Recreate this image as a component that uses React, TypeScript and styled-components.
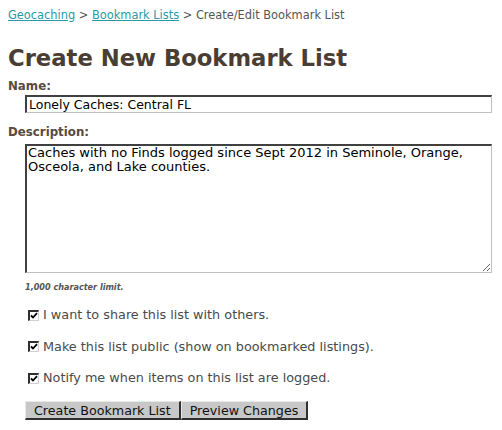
import React from 'react';
import styled, { createGlobalStyle } from 'styled-components';

const GlobalStyle = createGlobalStyle`
  body {
    margin: 0;
    background: #ffffff;
    font-family: "DejaVu Sans", Verdana, sans-serif;
    color: #4a4a4a;
  }
`;

const Page = styled.div`
  padding: 8px 8px 0 8px;
  width: 502px;
  box-sizing: border-box;
`;

const Breadcrumb = styled.div`
  font-size: 11.4px;
  line-height: 15px;
  color: #555555;
`;

const CrumbLink = styled.a`
  color: #2a9aa8;
  text-decoration: underline;
`;

const Title = styled.h1`
  margin: 21px 0 0 0;
  font-size: 22.7px;
  line-height: 28px;
  font-weight: bold;
  color: #4a3d33;
`;

const Label = styled.div<{ $top: number }>`
  font-size: 11.8px;
  line-height: 15px;
  font-weight: bold;
  color: #5b4a3b;
  margin-top: ${(p) => p.$top}px;
`;

const Indented = styled.div`
  padding-left: 17px;
`;

const TextInput = styled.input`
  display: block;
  box-sizing: border-box;
  width: 467px;
  height: 18px;
  margin: 1px 0 0 0;
  padding: 0 2px;
  font-family: "DejaVu Sans", Verdana, sans-serif;
  font-size: 12.5px;
  color: #000;
  border-style: solid;
  border-width: 2px 1px 1px 2px;
  border-color: #404040 #c0c0c0 #c0c0c0 #404040;
  outline: none;
`;

const TextArea = styled.textarea`
  display: block;
  box-sizing: border-box;
  width: 467px;
  height: 129px;
  margin: 4px 0 0 0;
  padding: 0 1px;
  font-family: "DejaVu Sans", Verdana, sans-serif;
  font-size: 13px;
  line-height: 14px;
  color: #000;
  border-style: solid;
  border-width: 2px 1px 1px 2px;
  border-color: #404040 #c0c0c0 #c0c0c0 #404040;
  resize: vertical;
  outline: none;
`;

const Hint = styled.div`
  margin-top: 8px;
  font-family: "DejaVu Sans Condensed", "DejaVu Sans", Verdana, sans-serif;
  font-size: 9px;
  line-height: 13px;
  font-weight: bold;
  font-style: italic;
  color: #555;
`;

const Options = styled.div`
  margin-top: 13px;
  display: flex;
  flex-direction: column;
  gap: 15.5px;
`;

const OptionRow = styled.label`
  display: flex;
  align-items: center;
  gap: 4px;
  padding-left: 3px;
  font-size: 12.8px;
  line-height: 16px;
  color: #4a4a4a;
`;

const Box = styled.span`
  display: inline-flex;
  align-items: center;
  justify-content: center;
  width: 11px;
  height: 11px;
  box-sizing: border-box;
  border-style: solid;
  border-width: 2px 1px 1px 2px;
  border-color: #303030 #d0d0d0 #d0d0d0 #303030;
  background: #fff;
`;

const Buttons = styled.div`
  display: flex;
  margin-top: 15px;
`;

const Button = styled.button`
  height: 19px;
  padding: 0 8px;
  font-family: "DejaVu Sans", Verdana, sans-serif;
  font-size: 12.7px;
  line-height: 15px;
  color: #111;
  background: #c8c8c8;
  border-style: solid;
  border-width: 1px 2px 2px 1px;
  border-color: #e8e8e8 #303030 #303030 #e8e8e8;
  cursor: pointer;
`;

const Check = () => (
  <Box>
    <svg width="8" height="8" viewBox="0 0 8 8">
      <path d="M1 3.5 L3 5.5 L7 1.2" stroke="#000" strokeWidth="1.8" fill="none" />
    </svg>
  </Box>
);

const options = [
  'I want to share this list with others.',
  'Make this list public (show on bookmarked listings).',
  'Notify me when items on this list are logged.',
];

export default function App() {
  return (
    <Page>
      <GlobalStyle />
      <Breadcrumb>
        <CrumbLink href="#">Geocaching</CrumbLink> &gt;{' '}
        <CrumbLink href="#">Bookmark Lists</CrumbLink> &gt; Create/Edit Bookmark List
      </Breadcrumb>
      <Title>Create New Bookmark List</Title>
      <Label $top={7}>Name:</Label>
      <Indented>
        <TextInput defaultValue="Lonely Caches: Central FL" />
      </Indented>
      <Label $top={12}>Description:</Label>
      <Indented>
        <TextArea defaultValue="Caches with no Finds logged since Sept 2012 in Seminole, Orange, Osceola, and Lake counties." />
        <Hint>1,000 character limit.</Hint>
        <Options>
          {options.map((text) => (
            <OptionRow key={text}>
              <Check />
              {text}
            </OptionRow>
          ))}
        </Options>
        <Buttons>
          <Button>Create Bookmark List</Button>
          <Button>Preview Changes</Button>
        </Buttons>
      </Indented>
    </Page>
  );
}
